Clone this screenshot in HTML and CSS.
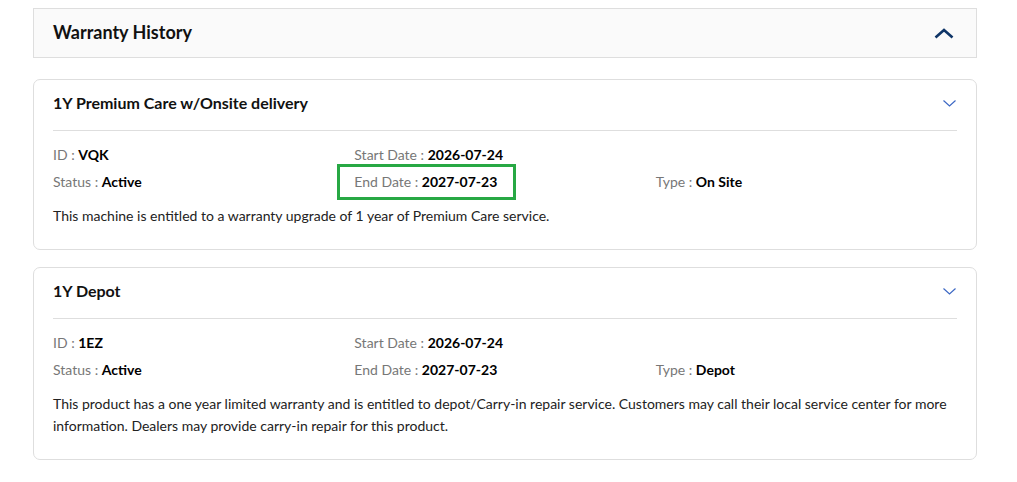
FILE: index.html
```html
<!DOCTYPE html>
<html lang="en">

<head>
    <meta charset="UTF-8">
    <meta name="viewport" content="width=device-width, initial-scale=1.0">
    <title>Warranty History</title>
    <link rel="stylesheet" href="styles.css">
</head>

<body>
    <div class="page">
        <div class="section-head">
            <h2>Warranty History</h2>
            <svg class="chev-up" width="20" height="11" viewBox="0 0 20 11">
                <path d="M1.5 9.5 L10 2 L18.5 9.5" fill="none" stroke="#0f3567" stroke-width="2.6" />
            </svg>
        </div>

        <div class="card">
            <div class="card-head">
                <h3>1Y Premium Care w/Onsite delivery</h3>
                <svg class="chev-down" width="13" height="7" viewBox="0 0 13 7">
                    <path d="M0.5 0.5 L6.5 6 L12.5 0.5" fill="none" stroke="#3d68c4" stroke-width="1.2" />
                </svg>
            </div>
            <div class="card-body">
                <div class="info">
                    <div><span class="label">ID : </span><b>VQK</b></div>
                    <div><span class="label">Start Date : </span><b>2026-07-24</b></div>
                    <div></div>
                    <div><span class="label">Status : </span><b>Active</b></div>
                    <div><span class="mark"><span class="label">End Date : </span><b>2027-07-23</b></span></div>
                    <div><span class="label">Type : </span><b>On Site</b></div>
                </div>
                <p class="desc">This machine is entitled to a warranty upgrade of 1 year of Premium Care service.</p>
            </div>
        </div>

        <div class="card">
            <div class="card-head">
                <h3>1Y Depot</h3>
                <svg class="chev-down" width="13" height="7" viewBox="0 0 13 7">
                    <path d="M0.5 0.5 L6.5 6 L12.5 0.5" fill="none" stroke="#3d68c4" stroke-width="1.2" />
                </svg>
            </div>
            <div class="card-body">
                <div class="info">
                    <div><span class="label">ID : </span><b>1EZ</b></div>
                    <div><span class="label">Start Date : </span><b>2026-07-24</b></div>
                    <div></div>
                    <div><span class="label">Status : </span><b>Active</b></div>
                    <div><span class="label">End Date : </span><b>2027-07-23</b></div>
                    <div><span class="label">Type : </span><b>Depot</b></div>
                </div>
                <p class="desc">This product has a one year limited warranty and is entitled to depot/Carry-in repair service. Customers may call their local service center for more information. Dealers may provide carry-in repair for this product.</p>
            </div>
        </div>
    </div>
</body>

</html>
```

FILE: styles.css
```css
body {
    margin: 0;
    padding: 0;
    background: #fff;
    font-family: Lato, "Liberation Sans", sans-serif;
    color: #111;
}

.page {
    margin: 8px 40px 0 33px;
}

.section-head {
    display: flex;
    align-items: center;
    justify-content: space-between;
    height: 48px;
    padding: 0 22px 0 19px;
    background: #fafafa;
    border: 1px solid #dedede;
}

h2 {
    margin: -2px 0 0;
    font-size: 18px;
    font-weight: 700;
    color: #111;
}

.card {
    margin-top: 21px;
    border: 1px solid #dedede;
    border-radius: 7px;
    background: #fff;
}

.card + .card {
    margin-top: 17px;
}

.card-head {
    display: flex;
    align-items: center;
    justify-content: space-between;
    margin: 0 19px;
    padding: 13px 1px 17px 0;
    border-bottom: 1px solid #dedede;
}

h3 {
    margin: 0;
    font-size: 16px;
    line-height: 20px;
    font-weight: 700;
    color: #111;
}

.card-body {
    padding: 10px 19px 22px;
}

.info {
    display: grid;
    grid-template-columns: repeat(3, 1fr);
    font-size: 14px;
    line-height: 27px;
}

.label {
    color: #777;
}

.info b {
    color: #000;
}

.mark {
    position: relative;
}

.mark::after {
    content: "";
    position: absolute;
    left: -17px;
    right: -19px;
    top: -9px;
    bottom: -10px;
    border: 3px solid #27a844;
}

.desc {
    margin: 10px 0 0;
    font-size: 14px;
    line-height: 22px;
    color: #222;
}
```
